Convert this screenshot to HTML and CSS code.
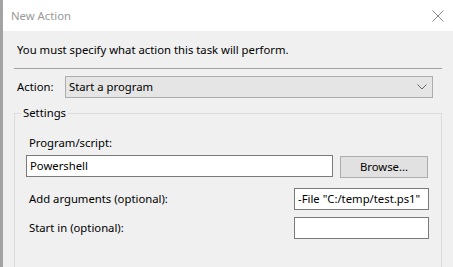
FILE: index.html
```html
<!DOCTYPE html>
<html>
<head>
<meta charset="utf-8">
<link rel="stylesheet" href="styles.css">
</head>
<body>
<div class="window">
  <div class="titlebar">
    <span class="title">New Action</span>
    <svg class="close" width="12" height="12" viewBox="0 0 12 12"><path d="M0.5 0.5 L11.5 11.5 M11.5 0.5 L0.5 11.5" stroke="#8a8a8a" stroke-width="1" fill="none"/></svg>
  </div>
  <div class="content">
    <div class="instruction">You must specify what action this task will perform.</div>
    <div class="separator"></div>
    <div class="action-row">
      <span class="action-label">Action:</span>
      <div class="dropdown">
        <span>Start a program</span>
        <svg class="chevron" width="10" height="6" viewBox="0 0 10 6"><path d="M0.5 0.5 L5 5 L9.5 0.5" stroke="#666" stroke-width="1" fill="none"/></svg>
      </div>
    </div>
    <fieldset class="settings">
      <legend>Settings</legend>
      <div class="label prog-label">Program/script:</div>
      <div class="prog-row">
        <div class="textbox prog-box">Powershell</div>
        <div class="button">Browse...</div>
      </div>
      <div class="field-row args-row">
        <span class="label">Add arguments (optional):</span>
        <div class="textbox small-box">-File "C:/temp/test.ps1"</div>
      </div>
      <div class="field-row start-row">
        <span class="label">Start in (optional):</span>
        <div class="textbox small-box"></div>
      </div>
    </fieldset>
  </div>
</div>
</body>
</html>
```
FILE: styles.css
```css
html, body {
  margin: 0;
  padding: 0;
  background: #f0f0f0;
}
body {
  font-family: "Noto Sans", "Open Sans", sans-serif;
  font-size: 11.3px;
  line-height: 16px;
  color: #000;
  width: 453px;
  height: 267px;
  overflow: hidden;
}
.window {
  height: 267px;
  border-left: 3px solid #a3a3a3;
  display: flex;
  flex-direction: column;
  box-sizing: border-box;
}
.titlebar {
  height: 31px;
  flex: none;
  background: #fff;
  display: flex;
  align-items: center;
  justify-content: space-between;
  padding: 0 9px 0 8px;
}
.title {
  color: #999;
}
.close {
  display: block;
}
.content {
  flex: 1;
  min-height: 0;
  background: #f0f0f0;
  padding-top: 11px;
  display: flex;
  flex-direction: column;
}
.instruction {
  margin-left: 14px;
}
.separator {
  height: 1px;
  background: #a0a0a0;
  margin: 10px 11px 0 11px;
}
.action-row {
  display: flex;
  align-items: center;
  margin-top: 7px;
  padding-left: 14px;
}
.action-label {
  width: 48px;
}
.dropdown {
  width: 368px;
  height: 22px;
  box-sizing: border-box;
  border: 1px solid #adadad;
  background: #e5e5e5;
  display: flex;
  align-items: center;
  justify-content: space-between;
  padding: 0 5px 0 3px;
}
.chevron {
  display: block;
}
.settings {
  flex: 1;
  min-height: 0;
  margin: 7px 11px 0 11px;
  border: 1px solid #dcdcdc;
  border-bottom: none;
  padding: 0 0 0 11px;
  min-inline-size: 0;
}
.settings legend {
  padding: 0 2px;
  margin-left: -5px;
  line-height: 16px;
}
.label {
  padding-left: 3px;
}
.prog-label {
  margin-top: 14px;
}
.prog-row {
  display: flex;
  align-items: flex-start;
  margin-top: 4px;
}
.textbox {
  height: 22px;
  box-sizing: border-box;
  border: 1px solid #7a7a7a;
  background: #fff;
  padding: 0 3px;
  display: flex;
  align-items: center;
  white-space: nowrap;
  overflow: hidden;
}
.prog-box {
  width: 307px;
}
.button {
  width: 88px;
  height: 22px;
  box-sizing: border-box;
  margin-left: 7px;
  margin-top: 1px;
  border: 1px solid #adadad;
  background: #e1e1e1;
  display: flex;
  align-items: center;
  justify-content: center;
}
.field-row {
  display: flex;
  align-items: center;
  justify-content: space-between;
  width: 403px;
}
.args-row {
  margin-top: 10px;
}
.start-row {
  margin-top: 7px;
}
.small-box {
  width: 135px;
}
```
